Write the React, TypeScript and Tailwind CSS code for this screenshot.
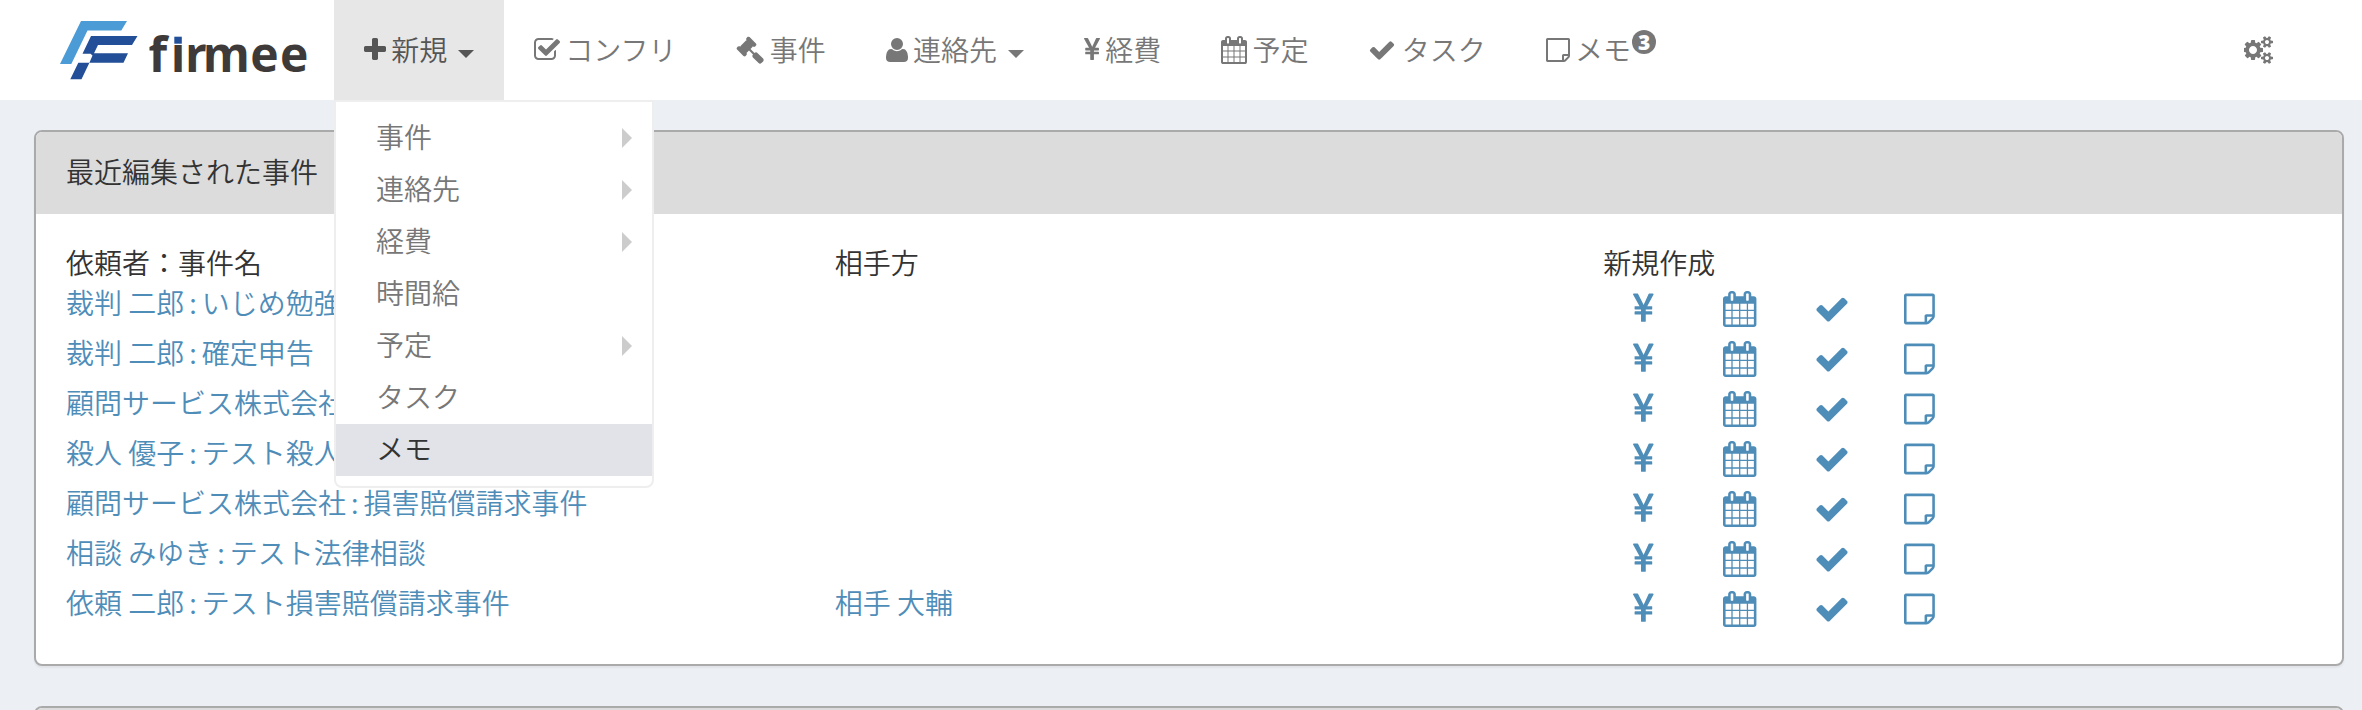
import React from "react";

type Glyph = { box: string; w: number; d: string };

const glyphs: Record<string, Glyph> = {
  plus: { box: "192 0 1408 1792", w: 1408, d: "M1600 736v192q0 40-28 68t-68 28h-416v416q0 40-28 68t-68 28h-192q-40 0-68-28t-28-68v-416h-416q-40 0-68-28t-28-68v-192q0-40 28-68t68-28h416v-416q0-40 28-68t68-28h192q40 0 68 28t28 68v416h416q40 0 68 28t28 68z" },
  checkSquare: { box: "64 0 1664 1792", w: 1664, d: "M1472 930v318q0 119-84.5 203.5t-203.5 84.5h-832q-119 0-203.5-84.5t-84.5-203.5v-832q0-119 84.5-203.5t203.5-84.5h832q63 0 117 25 15 7 18 23 3 17-9 29l-49 49q-10 10-23 10-3 0-9-2-23-6-45-6h-832q-66 0-113 47t-47 113v832q0 66 47 113t113 47h832q66 0 113-47t47-113v-254q0-13 9-22l64-64q10-10 23-10 6 0 12 3 20 8 20 29zm231-489l-814 814q-24 24-57 24t-57-24l-430-430q-24-24-24-57t24-57l110-110q24-24 57-24t57 24l263 263 647-647q24-24 57-24t57 24l110 110q24 24 24 57t-24 57z" },
  gavel: { box: "0 0 1792 1792", w: 1792, d: "M1771 1536q0 53-37 90l-107 108q-39 37-91 37-53 0-90-37l-363-364q-38-36-38-90 0-53 43-96l-256-256-126 126q-14 14-34 14t-34-14q2 2 12.5 12t12.5 13 10 11.5 10 13.5 6 13.5 5.5 16.5 1.5 18q0 38-28 68-3 3-16.5 18t-19 20.5-18.5 16.5-22 15.5-22 9-26 4.5q-40 0-68-28l-408-408q-28-28-28-68 0-13 4.5-26t9-22 15.5-22 16.5-18.5 20.5-19 18-16.5q30-28 68-28 10 0 18 1.5t16.5 5.5 13.5 6 13.5 10 11.5 10 13 12.5 12 12.5q-14-14-14-34t14-34l348-348q14-14 34-14t34 14q-2-2-12.5-12t-12.5-13-10-11.5-10-13.5-6-13.5-5.5-16.5-1.5-18q0-38 28-68 3-3 16.5-18t19-20.5 18.5-16.5 22-15.5 22-9 26-4.5q40 0 68 28l408 408q28 28 28 68 0 13-4.5 26t-9 22-15.5 22-16.5 18.5-20.5 19-18 16.5q-30 28-68 28-10 0-18-1.5t-16.5-5.5-13.5-6-13.5-10-11.5-10-13-12.5-12-12.5q14 14 14 34t-14 34l-126 126 256 256q43-43 96-43 52 0 91 37l363 363q37 39 37 91z" },
  user: { box: "192 0 1408 1792", w: 1408, d: "M1600 1405q0 120-73 189.5t-194 69.5h-874q-121 0-194-69.5t-73-189.5q0-53 3.5-103.5t14-109 26.5-108.5 43-97.5 62-81 85.5-53.5 111.5-20q9 0 42 21.5t74.5 48 108 48 133.5 21.5 133.5-21.5 108-48 74.5-48 42-21.5q61 0 111.5 20t85.5 53.5 62 81 43 97.5 26.5 108.5 14 109 3.5 103.5zm-320-893q0 159-112.5 271.5t-271.5 112.5-271.5-112.5-112.5-271.5 112.5-271.5 271.5-112.5 271.5 112.5 112.5 271.5z" },
  yen: { box: "382.5 0 1027 1792", w: 1027, d: "M985.5 1536h-172q-13 0-22.5-9t-9.5-23v-330h-288q-13 0-22.5-9t-9.5-23v-103q0-13 9.5-22.5t22.5-9.5h288v-85h-288q-13 0-22.5-9t-9.5-23v-104q0-13 9.5-22.5t22.5-9.5h214l-321-578q-8-16 0-32 10-16 28-16h194q19 0 29 18l215 425q19 38 56 125 10-24 30.5-68t27.5-61l191-420q8-19 29-19h191q17 0 27 16 9 14 1 31l-313 579h215q13 0 22.5 9.5t9.5 22.5v104q0 14-9.5 23t-22.5 9h-290v85h290q13 0 22.5 9.5t9.5 22.5v103q0 14-9.5 23t-22.5 9h-290v330q0 13-9.5 22.5t-22.5 9.5z" },
  calendar: { box: "64 0 1664 1792", w: 1664, d: "M192 1664h288v-288h-288v288zm352 0h320v-288h-320v288zm-352-352h288v-320h-288v320zm352 0h320v-320h-320v320zm-352-384h288v-288h-288v288zm736 736h320v-288h-320v288zm-384-736h320v-288h-320v288zm768 736h288v-288h-288v288zm-384-352h320v-320h-320v320zm-352-864v-288q0-13-9.5-22.5t-22.5-9.5h-64q-13 0-22.5 9.5t-9.5 22.5v288q0 13 9.5 22.5t22.5 9.5h64q13 0 22.5-9.5t9.5-22.5zm736 864h288v-320h-288v320zm-384-384h320v-288h-320v288zm384 0h288v-288h-288v288zm32-480v-288q0-13-9.5-22.5t-22.5-9.5h-64q-13 0-22.5 9.5t-9.5 22.5v288q0 13 9.5 22.5t22.5 9.5h64q13 0 22.5-9.5t9.5-22.5zm384-64v1280q0 52-38 90t-90 38h-1408q-52 0-90-38t-38-90v-1280q0-52 38-90t90-38h128v-96q0-66 47-113t113-47h64q66 0 113 47t47 113v96h384v-96q0-66 47-113t113-47h64q66 0 113 47t47 113v96h128q52 0 90 38t38 90z" },
  check: { box: "0 0 1792 1792", w: 1792, d: "M1671 566q0 40-28 68l-724 724-136 136q-28 28-68 28t-68-28l-136-136-362-362q-28-28-28-68t28-68l136-136q28-28 68-28t68 28l294 295 656-657q28-28 68-28t68 28l136 136q28 28 28 68z" },
  note: { box: "128 0 1536 1792", w: 1536, d: "M1528 1280h-248v248q29-10 41-22l185-185q12-12 22-41zm-280-128h288v-896h-1280v1280h896v-288q0-40 28-68t68-28zm416-928v1024q0 40-20 88t-48 76l-184 184q-28 28-76 48t-88 20h-1024q-40 0-68-28t-28-68v-1344q0-40 28-68t68-28h1344q40 0 68 28t28 68z" },
  cogs: { box: "0 0 1920 1792", w: 1920, d: "M832 896q0-106-75-181t-181-75-181 75-75 181 75 181 181 75 181-75 75-181zm768 512q0-52-38-90t-90-38-90 38-38 90q0 53 37.5 90.5t90.5 37.5 90.5-37.5 37.5-90.5zm0-1024q0-52-38-90t-90-38-90 38-38 90q0 53 37.5 90.5t90.5 37.5 90.5-37.5 37.5-90.5zm-384 421v185q0 10-7 19.5t-16 10.5l-155 24q-11 35-32 76 34 48 90 115 7 11 7 20 0 12-7 19-23 30-82.5 89.5t-78.5 59.5q-11 0-21-7l-115-90q-37 19-77 31-11 108-23 155-7 24-30 24h-186q-11 0-20-7.5t-10-17.5l-23-153q-34-10-75-31l-118 89q-7 7-20 7-11 0-21-8-144-133-144-160 0-9 7-19 10-14 41-53t47-61q-23-44-35-82l-152-24q-10-1-17-9.5t-7-19.5v-185q0-10 7-19.5t16-10.5l155-24q11-35 32-76-34-48-90-115-7-11-7-20 0-12 7-20 22-30 82-89t79-59q11 0 21 7l115 90q34-18 77-32 11-108 23-154 7-24 30-24h186q11 0 20 7.5t10 17.5l23 153q34 10 75 31l118-89q8-7 20-7 11 0 21 8 144 133 144 160 0 8-7 19-12 16-42 54t-45 60q23 48 34 82l152 23q10 2 17 10.5t7 19.5zm640 533v140q0 16-149 31-12 27-30 52 51 113 51 138 0 4-4 7-122 71-124 71-8 0-46-47t-52-68q-20 2-30 2t-30-2q-14 21-52 68t-46 47q-2 0-124-71-4-3-4-7 0-25 51-138-18-25-30-52-149-15-149-31v-140q0-16 149-31 13-29 30-52-51-113-51-138 0-4 4-7 4-2 35-20t59-34 30-16q8 0 46 46.5t52 67.5q20-2 30-2t30 2q51-71 92-112l6-2q4 0 124 70 4 3 4 7 0 25-51 138 17 23 30 52 149 15 149 31zm0-1024v140q0 16-149 31-12 27-30 52 51 113 51 138 0 4-4 7-122 71-124 71-8 0-46-47t-52-68q-20 2-30 2t-30-2q-14 21-52 68t-46 47q-2 0-124-71-4-3-4-7 0-25 51-138-18-25-30-52-149-15-149-31v-140q0-16 149-31 13-29 30-52-51-113-51-138 0-4 4-7 4-2 35-20t59-34 30-16q8 0 46 46.5t52 67.5q20-2 30-2t30 2q51-71 92-112l6-2q4 0 124 70 4 3 4 7 0 25-51 138 17 23 30 52 149 15 149 31z" },
};

function Icon({ name, size = 28 }: { name: string; size?: number }) {
  const g = glyphs[name];
  return (
    <svg viewBox={g.box} width={(g.w / 1792) * size} height={size} fill="currentColor" className="block shrink-0">
      <path d={g.d} />
    </svg>
  );
}

function Logo() {
  return (
    <svg width="334" height="100" viewBox="0 0 334 100" className="block shrink-0">
      <path fill="#4a9bd6" d="M81 21h46l-5.700 9.500H87.500L71.300 64H60z" />
      <path fill="#234f98" d="M91 36h46.500l-5.500 9H98l-4 8.300h34l-4.500 9.400H89.400L81.500 79.300H70.300L78.300 62.700H89.400L92.500 55.500 90.500 53.800H82.500z" />
      <text x="148.500 170.700 184.900 202.700 250.300 280" y="71.700" fontFamily="Open Sans" fontWeight="700" fontSize="48" fill="#3e3a39">firmee</text>
      <rect x="173" y="34" width="10" height="10.500" fill="#fff" />
      <rect x="174.300" y="36.700" width="7.500" height="7" fill="#234f98" />
    </svg>
  );
}

function Caret() {
  return <span className="ml-[10.700px] mt-2 h-0 w-0 border-x-8 border-t-8 border-x-transparent border-t-current" />;
}

const nav = [
  { icon: "plus", label: "新規", caret: true, active: true },
  { icon: "checkSquare", label: "コンフリ" },
  { icon: "gavel", label: "事件" },
  { icon: "user", label: "連絡先", caret: true },
  { icon: "yen", label: "経費" },
  { icon: "calendar", label: "予定" },
  { icon: "check", label: "タスク" },
  { icon: "note", label: "メモ", badge: 3 },
];

const menu = [
  { label: "事件", sub: true },
  { label: "連絡先", sub: true },
  { label: "経費", sub: true },
  { label: "時間給" },
  { label: "予定", sub: true },
  { label: "タスク" },
  { label: "メモ", active: true },
];

const cases = [
  { client: "裁判 二郎", title: "いじめ勉強", other: "" },
  { client: "裁判 二郎", title: "確定申告", other: "" },
  { client: "顧問サービス株式会社", title: "", other: "" },
  { client: "殺人 優子", title: "テスト殺人", other: "" },
  { client: "顧問サービス株式会社", title: "損害賠償請求事件", other: "" },
  { client: "相談 みゆき", title: "テスト法律相談", other: "" },
  { client: "依頼 二郎", title: "テスト損害賠償請求事件", other: "相手 大輔" },
];

function Dropdown() {
  return (
    <ul className="absolute left-0 top-[100px] z-10 w-80 rounded-b-lg border-2 border-[#eee] bg-white py-2.5 text-[#777]">
      {menu.map((m) => (
        <li
          key={m.label}
          className={
            m.active
              ? "flex h-[52px] items-center justify-between bg-[#e1e3e9] pl-10 pr-5 text-[#333]"
              : "flex h-[52px] items-center justify-between pl-10 pr-5"
          }
        >
          <span className="-mt-1">{m.label}</span>
          {m.sub && <span className="h-0 w-0 border-y-10 border-l-10 border-y-transparent border-l-[#ccc]" />}
        </li>
      ))}
    </ul>
  );
}

function Navbar() {
  return (
    <header className="flex h-[100px] bg-white text-[#777]">
      <Logo />
      <nav className="flex">
        {nav.map((n) => (
          <div
            key={n.label}
            className={n.active ? "relative flex items-center bg-[#e7e7e7] px-[30px] text-[#555]" : "relative flex items-center px-[30px]"}
          >
            <Icon name={n.icon} />
            <span className="-mt-0.5 ml-[5.300px] whitespace-nowrap">{n.label}</span>
            {n.caret && <Caret />}
            {n.badge && (
              <span className="mb-4 ml-px flex h-6 w-6 items-center justify-center rounded-full bg-[#777] font-['Open_Sans'] text-[21px] font-extrabold leading-none text-white">
                {n.badge}
              </span>
            )}
            {n.active && <Dropdown />}
          </div>
        ))}
      </nav>
      <div className="ml-auto flex items-center pr-[88px]">
        <Icon name="cogs" />
      </div>
    </header>
  );
}

export default function App() {
  return (
    <div className="h-[710px] w-[2362px] overflow-hidden bg-[#ecf0f5] font-['Noto_Sans_CJK_JP',sans-serif] text-[28px] font-[350] leading-10 text-[#333]">
      <Navbar />
      <main className="ml-[34px] mr-[18px] mt-[30px] flex flex-col gap-10">
        <section className="h-[536px] overflow-hidden rounded-lg border-2 border-[#aaa] bg-white shadow-[0_2px_2px_rgba(0,0,0,0.05)]">
          <h2 className="flex h-[82px] items-center bg-[#dcdcdc] pb-1 pl-[30px] font-[350]">最近編集された事件</h2>
          <div className="grid grid-cols-3 pt-7">
            <div className="pl-[30px]">
              <div className="h-10">依頼者：事件名</div>
              {cases.map((c, i) => (
                <a key={i} className="block h-[50px] whitespace-nowrap text-[#4f8db9]">
                  {c.client}
                  {c.title && <span className="inline-block w-[17.400px] text-center">:</span>}
                  {c.title}
                </a>
              ))}
            </div>
            <div className="pl-[30px]">
              <div className="h-10">相手方</div>
              {cases.map((c, i) => (
                <a key={i} className="block h-[50px] text-[#4f8db9]">{c.other}</a>
              ))}
            </div>
            <div className="pl-[30px]">
              <div className="h-10">新規作成</div>
              {cases.map((_, i) => (
                <div key={i} className="flex h-[50px] items-start pl-[30px] pt-[9px] text-[#4f8db9]">
                  <span className="w-[90px]"><Icon name="yen" size={36} /></span>
                  <span className="w-[90.500px]"><Icon name="calendar" size={36} /></span>
                  <span className="w-[90px]"><Icon name="check" size={36} /></span>
                  <Icon name="note" size={36} />
                </div>
              ))}
            </div>
          </div>
        </section>
        <section className="h-[200px] overflow-hidden rounded-lg border-2 border-[#aaa] bg-white">
          <div className="h-[82px] bg-[#dcdcdc]" />
        </section>
      </main>
    </div>
  );
}
